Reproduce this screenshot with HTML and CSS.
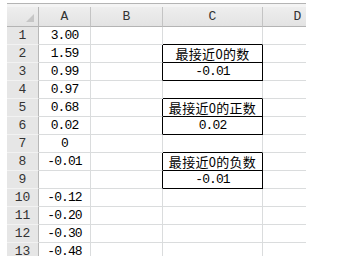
FILE: index.html
```html
<!DOCTYPE html>
<html lang="zh-CN">
<head>
  <meta charset="UTF-8" />
  <title>最接近0的数</title>
  <link rel="stylesheet" href="styles.css">
</head>
<body>
  <div class="sheet">
    <table class="grid">
      <colgroup>
        <col class="col-head">
        <col class="col-a">
        <col class="col-b">
        <col class="col-c">
        <col class="col-d">
      </colgroup>
      <thead>
        <tr class="head-row">
          <th class="corner"><span class="corner-mark"></span></th>
          <th>A</th>
          <th>B</th>
          <th>C</th>
          <th>D</th>
        </tr>
      </thead>
      <tbody>
        <tr><th>1</th><td>3.00</td><td></td><td class="bt"></td><td></td></tr>
        <tr><th>2</th><td>1.59</td><td class="bl"></td><td class="box cjk">最接近0的数</td><td></td></tr>
        <tr><th>3</th><td>0.99</td><td class="bl"></td><td class="box">-0.01</td><td></td></tr>
        <tr><th>4</th><td>0.97</td><td></td><td class="bt"></td><td></td></tr>
        <tr><th>5</th><td>0.68</td><td class="bl"></td><td class="box cjk">最接近0的正数</td><td></td></tr>
        <tr><th>6</th><td>0.02</td><td class="bl"></td><td class="box">0.02</td><td></td></tr>
        <tr><th>7</th><td>0</td><td></td><td class="bt"></td><td></td></tr>
        <tr><th>8</th><td>-0.01</td><td class="bl"></td><td class="box cjk">最接近0的负数</td><td></td></tr>
        <tr><th>9</th><td></td><td class="bl"></td><td class="box">-0.01</td><td></td></tr>
        <tr><th>10</th><td>-0.12</td><td></td><td></td><td></td></tr>
        <tr><th>11</th><td>-0.20</td><td></td><td></td><td></td></tr>
        <tr><th>12</th><td>-0.30</td><td></td><td></td><td></td></tr>
        <tr><th>13</th><td>-0.48</td><td></td><td></td><td></td></tr>
      </tbody>
    </table>
  </div>
</body>
</html>
```

FILE: styles.css
```css
body {
  margin: 0;
  background-color: #fff;
  font-family: "Liberation Mono", "Noto Sans CJK SC", monospace;
  font-size: 13px;
  color: #000;
}

.sheet {
  margin: 3px 0 0 7px;
  width: 299px;
  height: 253px;
  overflow: hidden;
  border-top: 1px solid #b4b4b4;
  padding-top: 3px;
  background-color: #f4f4f4;
}

.grid {
  border-collapse: separate;
  border-spacing: 0;
  table-layout: fixed;
  width: 326px;
  background-color: #fff;
}

.col-head { width: 32px; }
.col-a { width: 52px; }
.col-b { width: 72px; }
.col-c { width: 100px; }
.col-d { width: 70px; }

.grid tr {
  height: 18px;
}

.grid th,
.grid td {
  padding: 0;
  text-align: center;
  white-space: nowrap;
  overflow: hidden;
  border-right: 1px solid #dadcdd;
  border-bottom: 1px solid #dadcdd;
  line-height: 16px;
}

.grid td {
  letter-spacing: -0.9px;
}

/* column + row headers */
.grid th {
  font-weight: normal;
  color: #333;
  background-color: #e6e6e6;
  font-family: "Liberation Mono", monospace;
  font-size: 13px;
}

.grid tbody th {
  border-right: 1px solid #b8b8b8;
  border-bottom: 1px solid #f2f2f2;
}

.head-row {
  height: 20px !important;
}

.head-row th {
  background: linear-gradient(#eeeeee, #e3e3e3);
  border-right: 1px solid #c4c4c4;
  border-bottom: 1px solid #b4b4b4;
  line-height: 19px;
}

.head-row .corner {
  position: relative;
  border-right: 1px solid #b8b8b8;
}

/* little triangle in the select-all corner */
.corner-mark {
  position: absolute;
  right: 4px;
  bottom: 4px;
  width: 0;
  height: 0;
  border-left: 8px solid transparent;
  border-bottom: 8px solid #c6c6c6;
}

/* black boxes in column C */
.grid .bt { border-bottom-color: #000; }
.grid .bl { border-right-color: #000; }
.grid .box {
  border-right-color: #000;
  border-bottom-color: #000;
}

.grid .cjk {
  font-family: "Noto Sans CJK SC", sans-serif;
  font-size: 13px;
  letter-spacing: 0.3px;
}
```
